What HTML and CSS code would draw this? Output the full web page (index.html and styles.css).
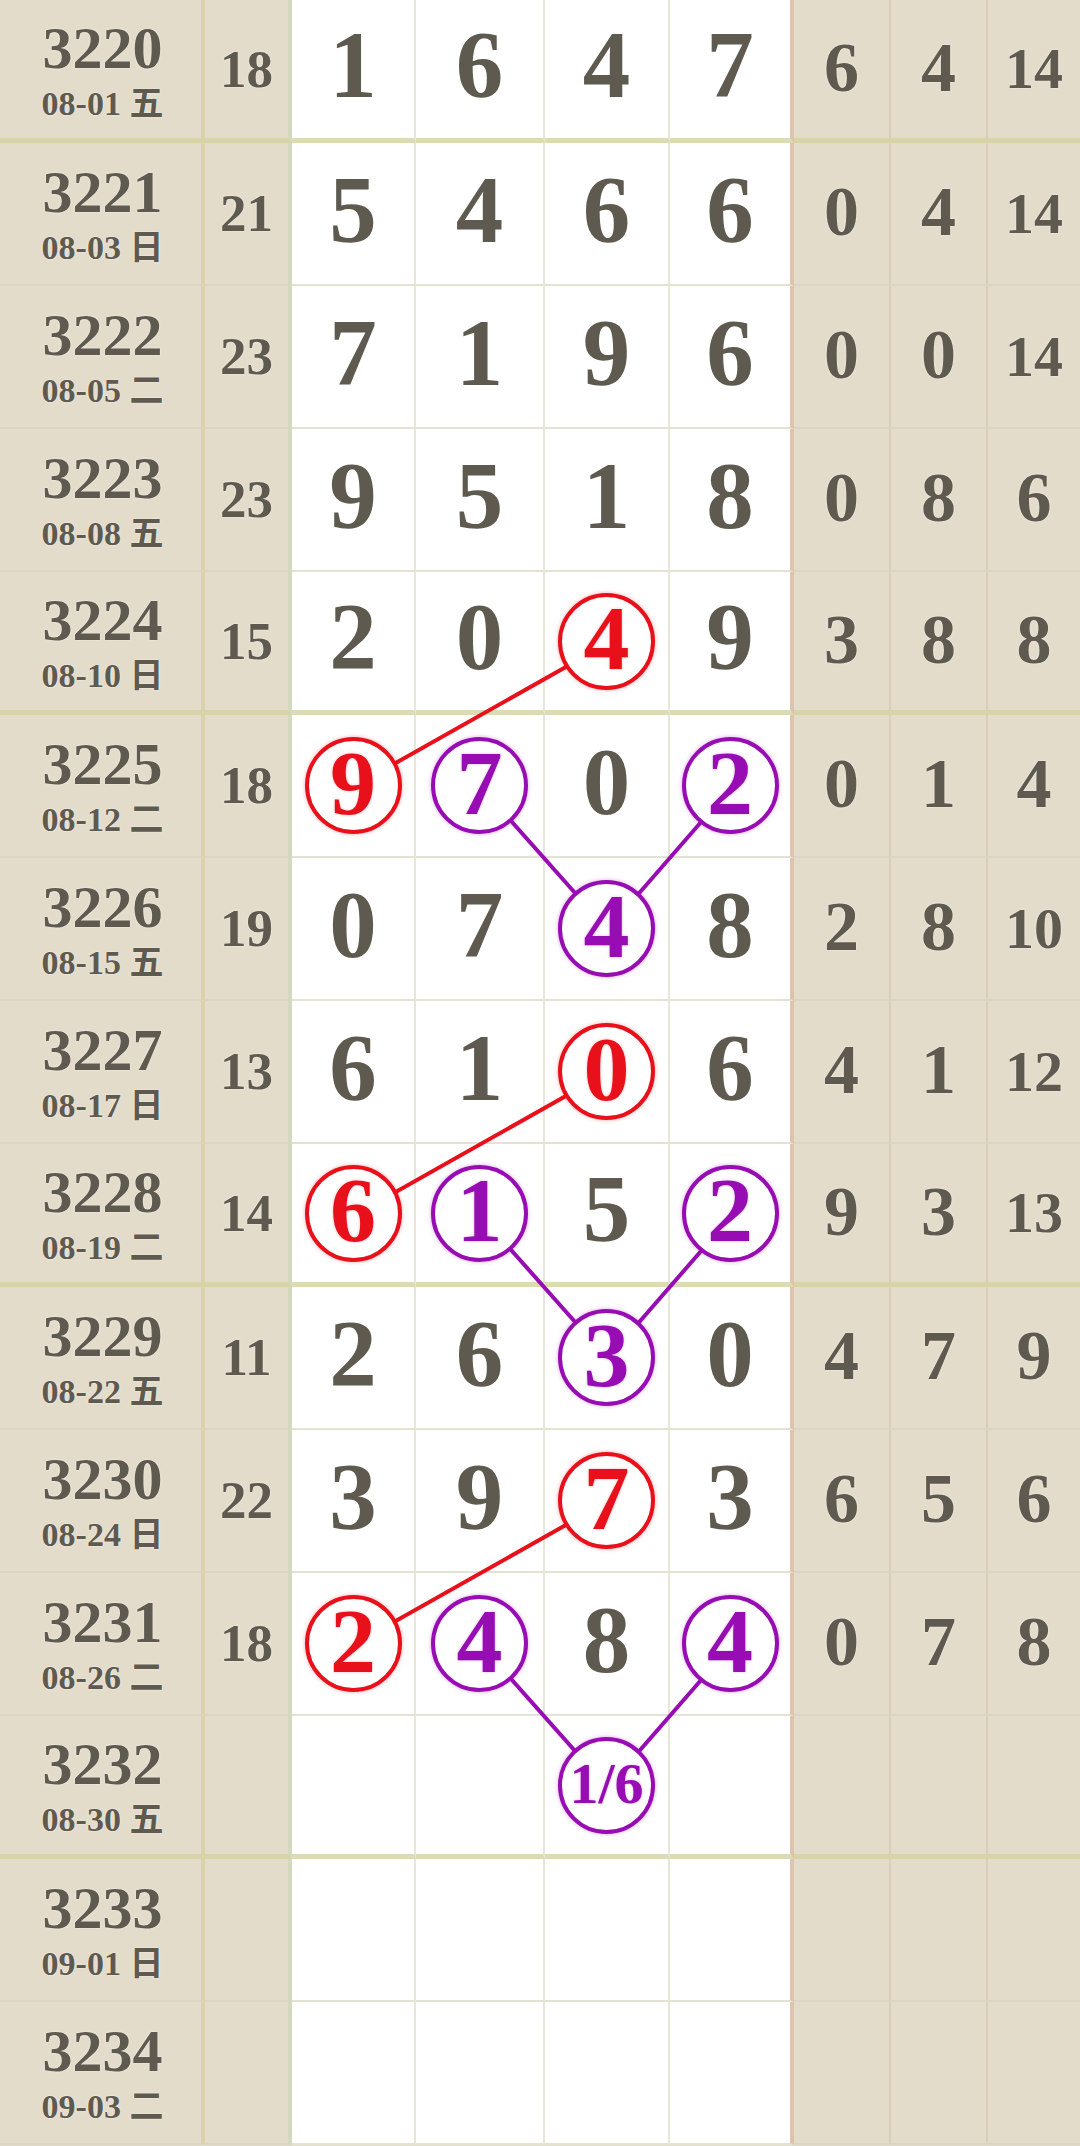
FILE: index.html
```html
<!DOCTYPE html>
<html lang="zh">
<head>
<meta charset="utf-8">
<title>走势图</title>
<link rel="stylesheet" href="styles.css">
</head>
<body>
<div class="sheet">
  <div class="row group">
    <div class="cell p"><span class="no">3220</span><span class="dt">08-01 五</span></div>
    <div class="cell s">18</div>
    <div class="cell d">1</div><div class="cell d">6</div><div class="cell d">4</div><div class="cell d d4">7</div>
    <div class="cell r">6</div><div class="cell r">4</div><div class="cell r sm last">14</div>
  </div>
  <div class="row">
    <div class="cell p"><span class="no">3221</span><span class="dt">08-03 日</span></div>
    <div class="cell s">21</div>
    <div class="cell d">5</div><div class="cell d">4</div><div class="cell d">6</div><div class="cell d d4">6</div>
    <div class="cell r">0</div><div class="cell r">4</div><div class="cell r sm last">14</div>
  </div>
  <div class="row">
    <div class="cell p"><span class="no">3222</span><span class="dt">08-05 二</span></div>
    <div class="cell s">23</div>
    <div class="cell d">7</div><div class="cell d">1</div><div class="cell d">9</div><div class="cell d d4">6</div>
    <div class="cell r">0</div><div class="cell r">0</div><div class="cell r sm last">14</div>
  </div>
  <div class="row">
    <div class="cell p"><span class="no">3223</span><span class="dt">08-08 五</span></div>
    <div class="cell s">23</div>
    <div class="cell d">9</div><div class="cell d">5</div><div class="cell d">1</div><div class="cell d d4">8</div>
    <div class="cell r">0</div><div class="cell r">8</div><div class="cell r last">6</div>
  </div>
  <div class="row group">
    <div class="cell p"><span class="no">3224</span><span class="dt">08-10 日</span></div>
    <div class="cell s">15</div>
    <div class="cell d">2</div><div class="cell d">0</div><div class="cell d c"><span class="ring red">4</span></div><div class="cell d d4">9</div>
    <div class="cell r">3</div><div class="cell r">8</div><div class="cell r last">8</div>
  </div>
  <div class="row">
    <div class="cell p"><span class="no">3225</span><span class="dt">08-12 二</span></div>
    <div class="cell s">18</div>
    <div class="cell d c"><span class="ring red">9</span></div><div class="cell d c"><span class="ring purple">7</span></div><div class="cell d">0</div><div class="cell d d4 c"><span class="ring purple">2</span></div>
    <div class="cell r">0</div><div class="cell r">1</div><div class="cell r last">4</div>
  </div>
  <div class="row">
    <div class="cell p"><span class="no">3226</span><span class="dt">08-15 五</span></div>
    <div class="cell s">19</div>
    <div class="cell d">0</div><div class="cell d">7</div><div class="cell d c"><span class="ring purple">4</span></div><div class="cell d d4">8</div>
    <div class="cell r">2</div><div class="cell r">8</div><div class="cell r sm last">10</div>
  </div>
  <div class="row">
    <div class="cell p"><span class="no">3227</span><span class="dt">08-17 日</span></div>
    <div class="cell s">13</div>
    <div class="cell d">6</div><div class="cell d">1</div><div class="cell d c"><span class="ring red">0</span></div><div class="cell d d4">6</div>
    <div class="cell r">4</div><div class="cell r">1</div><div class="cell r sm last">12</div>
  </div>
  <div class="row group">
    <div class="cell p"><span class="no">3228</span><span class="dt">08-19 二</span></div>
    <div class="cell s">14</div>
    <div class="cell d c"><span class="ring red">6</span></div><div class="cell d c"><span class="ring purple">1</span></div><div class="cell d">5</div><div class="cell d d4 c"><span class="ring purple">2</span></div>
    <div class="cell r">9</div><div class="cell r">3</div><div class="cell r sm last">13</div>
  </div>
  <div class="row">
    <div class="cell p"><span class="no">3229</span><span class="dt">08-22 五</span></div>
    <div class="cell s">11</div>
    <div class="cell d">2</div><div class="cell d">6</div><div class="cell d c"><span class="ring purple">3</span></div><div class="cell d d4">0</div>
    <div class="cell r">4</div><div class="cell r">7</div><div class="cell r last">9</div>
  </div>
  <div class="row">
    <div class="cell p"><span class="no">3230</span><span class="dt">08-24 日</span></div>
    <div class="cell s">22</div>
    <div class="cell d">3</div><div class="cell d">9</div><div class="cell d c"><span class="ring red">7</span></div><div class="cell d d4">3</div>
    <div class="cell r">6</div><div class="cell r">5</div><div class="cell r last">6</div>
  </div>
  <div class="row">
    <div class="cell p"><span class="no">3231</span><span class="dt">08-26 二</span></div>
    <div class="cell s">18</div>
    <div class="cell d c"><span class="ring red">2</span></div><div class="cell d c"><span class="ring purple">4</span></div><div class="cell d">8</div><div class="cell d d4 c"><span class="ring purple">4</span></div>
    <div class="cell r">0</div><div class="cell r">7</div><div class="cell r last">8</div>
  </div>
  <div class="row group">
    <div class="cell p"><span class="no">3232</span><span class="dt">08-30 五</span></div>
    <div class="cell s"></div>
    <div class="cell d"></div><div class="cell d"></div><div class="cell d c"><span class="ring purple frac">1/6</span></div><div class="cell d d4"></div>
    <div class="cell r"></div><div class="cell r"></div><div class="cell r last"></div>
  </div>
  <div class="row">
    <div class="cell p"><span class="no">3233</span><span class="dt">09-01 日</span></div>
    <div class="cell s"></div>
    <div class="cell d"></div><div class="cell d"></div><div class="cell d"></div><div class="cell d d4"></div>
    <div class="cell r"></div><div class="cell r"></div><div class="cell r last"></div>
  </div>
  <div class="row">
    <div class="cell p"><span class="no">3234</span><span class="dt">09-03 二</span></div>
    <div class="cell s"></div>
    <div class="cell d"></div><div class="cell d"></div><div class="cell d"></div><div class="cell d d4"></div>
    <div class="cell r"></div><div class="cell r"></div><div class="cell r last"></div>
  </div>

  <svg class="links" width="1080" height="2146" viewBox="0 0 1080 2146">
    <g class="ln-red">
      <line x1="607.5" y1="643.5" x2="354" y2="786.5"/>
      <line x1="607.5" y1="1072.5" x2="354" y2="1215.5"/>
      <line x1="607.5" y1="1501.5" x2="354" y2="1644.5"/>
    </g>
    <g class="ln-purple">
      <polyline points="480.5,786.5 607.5,929.5 732,786.5"/>
      <polyline points="480.5,1215.5 607.5,1358.5 732,1215.5"/>
      <polyline points="480.5,1644.5 607.5,1787.5 732,1644.5"/>
    </g>
  </svg>
</div>
</body>
</html>
```
FILE: styles.css
```css
html, body {
  margin: 0;
  padding: 0;
  background: #e4dccb;
}

body {
  width: 1080px;
  height: 2146px;
  overflow: hidden;
  font-family: "Liberation Serif", "Noto Sans CJK SC", serif;
  font-weight: 700;
  color: #5f5a4f;
}

.sheet {
  position: relative;
  width: 1080px;
}

.row {
  display: grid;
  grid-template-columns: 205px 87px 124px 129px 125px 124px 97px 97px 92px;
  height: 143px;
}

.cell {
  box-sizing: border-box;
  display: flex;
  align-items: center;
  justify-content: center;
  line-height: 1;
  border-bottom: 2px solid #dbd5c1;
  text-shadow: 0 0 2px rgba(255, 255, 255, 0.7);
}

.row.group .cell {
  border-bottom: 5px solid #d8d4a5;
}

.p {
  flex-direction: column;
  gap: 9px;
  background: #e4dccb;
  border-right: 4px solid #d9d3a9;
  padding-left: 4px;
}

.p .no {
  font-size: 60px;
  line-height: 60px;
}

.p .dt {
  font-size: 34px;
  line-height: 34px;
  white-space: nowrap;
}

.s {
  font-size: 53px;
  background: #e4dccb;
  border-right: 4px solid #d3d9bf;
}

.d {
  font-size: 95px;
  background: #ffffff;
  border-right: 2px solid #e8e6d8;
  padding-bottom: 7px;
}

.row .d {
  border-bottom-color: #e4e2d2;
}

.row.group .d {
  border-bottom-color: #dcdcb4;
}

.d.d4 {
  border-right: 4px solid #dcc4ad;
}

.d.c {
  padding-bottom: 0;
}

.r {
  font-size: 70px;
  background: #e4dccb;
  border-right: 2px solid #d8cfb9;
  padding-bottom: 3px;
}

.r.sm {
  font-size: 58px;
  padding-bottom: 0;
}

.r.last {
  border-right: none;
}

.ring {
  box-sizing: border-box;
  position: relative;
  z-index: 2;
  width: 97px;
  height: 97px;
  border-radius: 50%;
  border: 4px solid currentColor;
  background: #ffffff;
  display: flex;
  align-items: center;
  justify-content: center;
  font-size: 92px;
  line-height: 1;
  padding-bottom: 6px;
}

.ring.red {
  color: #e8101a;
  box-shadow: 0 0 4px rgba(232, 16, 26, 0.35);
  text-shadow: 0 0 3px rgba(232, 16, 26, 0.3);
}

.ring.purple {
  color: #980cb4;
  box-shadow: 0 0 4px rgba(152, 12, 180, 0.35);
  text-shadow: 0 0 3px rgba(152, 12, 180, 0.3);
}

.ring.frac {
  font-size: 58px;
  padding-bottom: 2px;
}

.links {
  position: absolute;
  top: 0;
  left: 0;
  z-index: 1;
  pointer-events: none;
}

.ln-red line {
  stroke: #e8101a;
  stroke-width: 4;
  stroke-linecap: round;
}

.ln-purple polyline {
  stroke: #980cb4;
  stroke-width: 4;
  fill: none;
  stroke-linejoin: round;
  stroke-linecap: round;
}
```
